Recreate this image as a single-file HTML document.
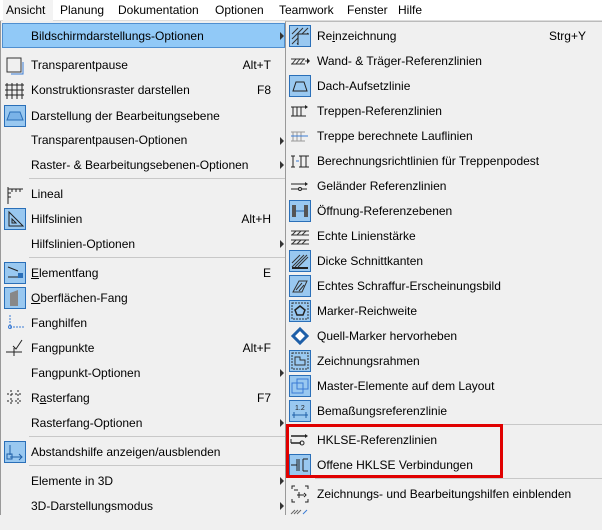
<!DOCTYPE html>
<html><head><meta charset="utf-8"><style>
*{margin:0;padding:0;box-sizing:border-box}
body{width:602px;height:515px;overflow:hidden;background:#f0f0f0;font-family:"Liberation Sans",sans-serif;font-size:12px;color:#000;position:relative}
.bar{position:absolute;left:0;top:0;width:602px;height:21px;background:#fff;border-bottom:1px solid #ddd}
.bar span{position:absolute;top:3px}
.m{position:absolute;left:0;top:21px;width:286px;height:494px;background:#f0f0f0;border-left:1px solid #999}
.s{position:absolute;left:285px;top:21px;width:317px;height:494px;background:#f0f0f0;border-left:1px solid #999;border-top:1px solid #bbb}
.t{position:absolute;white-space:nowrap}
.k{position:absolute;white-space:nowrap;text-align:right}
.sep{position:absolute;height:1px;background:#c8c8c8}
.arr{position:absolute;width:0;height:0;border-left:4px solid #333;border-top:4px solid transparent;border-bottom:4px solid transparent}
.ib{position:absolute;width:22px;height:22px;background:#99c8f0;border:1px solid #2a6fb8}
.ic{position:absolute;width:22px;height:22px}
u{text-decoration:underline}
</style></head><body>
<div class="bar">
<span style="left:3px;top:0;height:21px;width:50px;background:#f3f3f3"></span>
<span style="left:6px">Ansicht</span><span style="left:60px">Planung</span><span style="left:118px">Dokumentation</span><span style="left:215px">Optionen</span><span style="left:279px">Teamwork</span><span style="left:347px">Fenster</span><span style="left:398px">Hilfe</span>
</div>
<div class="m"></div>
<div class="s"></div>
<div style="position:absolute;left:2px;top:23px;width:283px;height:25px;background:#91c9f7;border:1px solid #4f8fd0"></div>

<div class="t" style="left:31px;top:29px">Bildschirmdarstellungs-Optionen</div>
<div class="t" style="left:31px;top:58px">Transparentpause</div><div class="k" style="right:331px;top:58px">Alt+T</div>
<div class="t" style="left:31px;top:83px">Konstruktionsraster darstellen</div><div class="k" style="right:331px;top:83px">F8</div>
<div class="t" style="left:31px;top:109px">Darstellung der Bearbeitungsebene</div>
<div class="t" style="left:31px;top:133px">Transparentpausen-Optionen</div>
<div class="t" style="left:31px;top:158px">Raster- &amp; Bearbeitungsebenen-Optionen</div>
<div class="sep" style="left:29px;top:178px;width:256px"></div>
<div class="t" style="left:31px;top:187px">Lineal</div>
<div class="t" style="left:31px;top:212px">Hilfslinien</div><div class="k" style="right:331px;top:212px">Alt+H</div>
<div class="t" style="left:31px;top:237px">Hilfslinien-Optionen</div>
<div class="sep" style="left:29px;top:257px;width:256px"></div>
<div class="t" style="left:31px;top:266px"><u>E</u>lementfang</div><div class="k" style="right:331px;top:266px">E</div>
<div class="t" style="left:31px;top:291px"><u>O</u>berflächen-Fang</div>
<div class="t" style="left:31px;top:316px">Fanghilfen</div>
<div class="t" style="left:31px;top:341px">Fangpunkte</div><div class="k" style="right:331px;top:341px">Alt+F</div>
<div class="t" style="left:31px;top:366px">Fangpunkt-Optionen</div>
<div class="t" style="left:31px;top:391px">R<u>a</u>sterfang</div><div class="k" style="right:331px;top:391px">F7</div>
<div class="t" style="left:31px;top:416px">Rasterfang-Optionen</div>
<div class="sep" style="left:29px;top:436px;width:256px"></div>
<div class="t" style="left:31px;top:445px">Abstandshilfe anzeigen/ausblenden</div>
<div class="sep" style="left:29px;top:465px;width:256px"></div>
<div class="t" style="left:31px;top:474px">Elemente in 3D</div>
<div class="t" style="left:31px;top:499px">3D-Darstellungsmodus</div>
<div class="arr" style="left:280px;top:32px"></div>
<div class="arr" style="left:280px;top:137px"></div>
<div class="arr" style="left:280px;top:161px"></div>
<div class="arr" style="left:280px;top:240px"></div>
<div class="arr" style="left:280px;top:369px"></div>
<div class="arr" style="left:280px;top:419px"></div>
<div class="arr" style="left:280px;top:477px"></div>
<div class="arr" style="left:280px;top:502px"></div>

<svg class="ic" style="left:4px;top:55px" viewBox="0 0 22 22"><rect x="3" y="3" width="14" height="14" fill="none" stroke="#333"/><path d="M7 19h12V7" fill="none" stroke="#3a7bd5"/></svg>
<svg class="ic" style="left:4px;top:80px" viewBox="0 0 22 22"><path d="M3 3v16M8 3v16M13 3v16M18 3v16M1 5h19M1 10h19M1 15h19" stroke="#222" fill="none"/></svg>
<div class="ib" style="left:4px;top:105px"></div>
<svg class="ic" style="left:4px;top:105px" viewBox="0 0 22 22"><path d="M6 7h10l3 8H3z" fill="#7ab3e8" stroke="#2a6fb8"/></svg>
<svg class="ic" style="left:4px;top:184px" viewBox="0 0 22 22"><path d="M4 3v17M4 5h15M8 5v3M12 5v3M16 5v3M4 9h3M4 13h3" stroke="#222" fill="none"/></svg>
<div class="ib" style="left:4px;top:208px"></div>
<svg class="ic" style="left:4px;top:208px" viewBox="0 0 22 22"><path d="M5 4v14h14z M8 11v4h4z" stroke="#222" fill="none"/></svg>
<div class="ib" style="left:4px;top:262px"></div>
<svg class="ic" style="left:4px;top:262px" viewBox="0 0 22 22"><path d="M4 5l10 4M4 15h10" stroke="#222"/><rect x="14" y="11" width="5" height="5" fill="#2a6fb8"/></svg>
<div class="ib" style="left:4px;top:287px"></div>
<svg class="ic" style="left:4px;top:287px" viewBox="0 0 22 22"><path d="M6 19V6l8-3v16z" fill="#888"/></svg>
<svg class="ic" style="left:4px;top:312px" viewBox="0 0 22 22"><path d="M6 3v11M6 15h14" stroke="#3a7bd5" stroke-dasharray="2 1"/><circle cx="6" cy="15" r="1.5" fill="none" stroke="#3a7bd5"/></svg>
<svg class="ic" style="left:4px;top:337px" viewBox="0 0 22 22"><path d="M2 15h16M10 11v8M9 9l3 3 6-9" stroke="#222" fill="none"/></svg>
<svg class="ic" style="left:4px;top:387px" viewBox="0 0 22 22"><path d="M7 3v16M14 3v16M3 7h16M3 14h16" stroke="#222" stroke-dasharray="2 2"/></svg>
<div class="ib" style="left:4px;top:441px"></div>
<svg class="ic" style="left:4px;top:441px" viewBox="0 0 22 22"><path d="M6 4v10M6 16h12M15 13l3 3-3 3" stroke="#1e5fa8" fill="none"/><rect x="3" y="13" width="5" height="5" fill="none" stroke="#1e5fa8"/></svg>

<div class="t" style="left:317px;top:29px">Re<u>i</u>nzeichnung</div><div class="k" style="right:16px;top:29px">Strg+Y</div>
<div class="t" style="left:317px;top:54px">Wand- &amp; Träger-Referenzlinien</div>
<div class="t" style="left:317px;top:79px">Dach-Aufsetzlinie</div>
<div class="t" style="left:317px;top:104px">Treppen-Referenzlinien</div>
<div class="t" style="left:317px;top:129px">Treppe berechnete Lauflinien</div>
<div class="t" style="left:317px;top:154px">Berechnungsrichtlinien für Treppenpodest</div>
<div class="t" style="left:317px;top:179px">Geländer Referenzlinien</div>
<div class="t" style="left:317px;top:204px">Öffnung-Referenzebenen</div>
<div class="t" style="left:317px;top:229px">Echte Linienstärke</div>
<div class="t" style="left:317px;top:254px">Dicke Schnittkanten</div>
<div class="t" style="left:317px;top:279px">Echtes Schraffur-Erscheinungsbild</div>
<div class="t" style="left:317px;top:304px">Marker-Reichweite</div>
<div class="t" style="left:317px;top:329px">Quell-Marker hervorheben</div>
<div class="t" style="left:317px;top:354px">Zeichnungsrahmen</div>
<div class="t" style="left:317px;top:379px">Master-Elemente auf dem Layout</div>
<div class="t" style="left:317px;top:404px">Bemaßungsreferenzlinie</div>
<div class="sep" style="left:315px;top:424px;width:287px"></div>
<div class="t" style="left:317px;top:433px">HKLSE-Referenzlinien</div>
<div class="t" style="left:317px;top:458px">Offene HKLSE Verbindungen</div>
<div class="sep" style="left:315px;top:478px;width:287px"></div>
<div class="t" style="left:317px;top:487px">Zeichnungs- und Bearbeitungshilfen einblenden</div>

<div class="ib" style="left:289px;top:25px"></div>
<svg class="ic" style="left:289px;top:25px" viewBox="0 0 22 22"><path d="M3 19L19 3M3 14L14 3M3 9L9 3M8 19L19 8" stroke="#333"/><rect x="9" y="9" width="11" height="11" fill="#99c8f0"/><path d="M9 20V9h11" stroke="#222" fill="none"/></svg>
<svg class="ic" style="left:289px;top:50px" viewBox="0 0 22 22"><path d="M2 9h14M2 14h14M3 14l4-5M7 14l4-5M11 14l4-5M16 11h3" stroke="#333" fill="none"/><path d="M18 8l3 3-3 3z" fill="#222"/></svg>
<div class="ib" style="left:289px;top:75px"></div>
<svg class="ic" style="left:289px;top:75px" viewBox="0 0 22 22"><path d="M7 7h8l3 9H4z" fill="none" stroke="#222"/></svg>
<svg class="ic" style="left:289px;top:100px" viewBox="0 0 22 22"><path d="M2 7h15M2 16h15M4 7v9M8 7v9M12 7v9" stroke="#222" fill="none"/><path d="M16 5l3 2-3 2z" fill="#222"/></svg>
<svg class="ic" style="left:289px;top:125px" viewBox="0 0 22 22"><path d="M2 7h14M2 16h14M4 7v9M8 7v9M12 7v9" stroke="#999" fill="none"/><path d="M2 11h17" stroke="#3a7bd5"/></svg>
<svg class="ic" style="left:289px;top:150px" viewBox="0 0 22 22"><path d="M2 6h4M2 17h4M4 6v11M10 6h10M10 17h10M12 6v11M17 6v11" stroke="#222" fill="none"/><path d="M7 11h3" stroke="#3a7bd5"/></svg>
<svg class="ic" style="left:289px;top:175px" viewBox="0 0 22 22"><path d="M2 9h15M2 14h8M12 14h6" stroke="#222"/><path d="M16 7l3 2-3 2z" fill="#222"/><circle cx="11" cy="14" r="1.5" fill="none" stroke="#222"/></svg>
<div class="ib" style="left:289px;top:200px"></div>
<svg class="ic" style="left:289px;top:200px" viewBox="0 0 22 22"><rect x="3" y="5" width="4" height="12" fill="#555"/><rect x="15" y="5" width="4" height="12" fill="#555"/><path d="M7 11h8" stroke="#1e5fa8"/></svg>
<svg class="ic" style="left:289px;top:225px" viewBox="0 0 22 22"><path d="M2 6h18M2 10h18M2 15h18M2 19h18M3 10l4-4M8 10l4-4M13 10l4-4M3 19l4-4M8 19l4-4M13 19l4-4" stroke="#333"/></svg>
<div class="ib" style="left:289px;top:250px"></div>
<svg class="ic" style="left:289px;top:250px" viewBox="0 0 22 22"><path d="M3 17L15 5M6 17L18 5M9 17L19 7M3 13L11 5" stroke="#333"/><path d="M3 18h16" stroke="#222" stroke-width="2"/></svg>
<div class="ib" style="left:289px;top:275px"></div>
<svg class="ic" style="left:289px;top:275px" viewBox="0 0 22 22"><path d="M4 17L10 6h8l-5 11z M7 15l6-7M10 16l5-6" stroke="#333" fill="none"/></svg>
<div class="ib" style="left:289px;top:300px"></div>
<svg class="ic" style="left:289px;top:300px" viewBox="0 0 22 22"><rect x="3" y="3" width="16" height="16" fill="none" stroke="#333" stroke-dasharray="2 1"/><path d="M11 6l5 4-2 5H8L6 10z" fill="none" stroke="#222" stroke-width="1.5"/></svg>
<svg class="ic" style="left:289px;top:325px" viewBox="0 0 22 22"><path d="M11 4l7 7-7 7-7-7z" fill="#fff" stroke="#1e5fa8" stroke-width="3"/></svg>
<div class="ib" style="left:289px;top:350px"></div>
<svg class="ic" style="left:289px;top:350px" viewBox="0 0 22 22"><rect x="3" y="3" width="16" height="16" fill="none" stroke="#333" stroke-dasharray="2 1"/><path d="M6 7v8h10v-5h-5V7z" fill="none" stroke="#333"/></svg>
<div class="ib" style="left:289px;top:375px"></div>
<svg class="ic" style="left:289px;top:375px" viewBox="0 0 22 22"><rect x="3" y="8" width="11" height="10" fill="none" stroke="#3a7bd5"/><rect x="8" y="4" width="11" height="10" fill="none" stroke="#3a7bd5"/></svg>
<div class="ib" style="left:289px;top:400px"></div>
<svg class="ic" style="left:289px;top:400px" viewBox="0 0 22 22"><text x="6" y="10" font-size="7" font-family="Liberation Sans" fill="#222">1.2</text><path d="M3 15h16M5 12v6M17 12v6" stroke="#1e5fa8"/></svg>
<svg class="ic" style="left:289px;top:429px" viewBox="0 0 22 22"><path d="M2 7h15M2 14h10" stroke="#222" stroke-width="1.5"/><path d="M16 5l3 2-3 2z" fill="#222"/><circle cx="13" cy="14" r="2" fill="none" stroke="#222"/><path d="M2 10v4" stroke="#222"/></svg>
<div class="ib" style="left:289px;top:454px"></div>
<svg class="ic" style="left:289px;top:454px" viewBox="0 0 22 22"><path d="M2 11h6M8 5v12M10 5v12M14 5v12M14 5h5M14 17h5" stroke="#222" fill="none"/></svg>
<svg class="ic" style="left:289px;top:483px" viewBox="0 0 22 22"><path d="M3 6V3h3M16 3h3v3M3 16v3h3M16 19h3v-3M5 7h4M8 12h7M10 9v6M15 10l2 2-2 2" stroke="#222" fill="none"/></svg>
<svg class="ic" style="left:289px;top:508px" viewBox="0 0 22 22"><path d="M2 6l4-4M5 6l4-4M8 6l4-4" stroke="#666"/><path d="M14 6l4-4" stroke="#3a7bd5"/></svg>

<div style="position:absolute;left:286px;top:424px;width:217px;height:54px;border:3px solid #e00000"></div>
</body></html>
